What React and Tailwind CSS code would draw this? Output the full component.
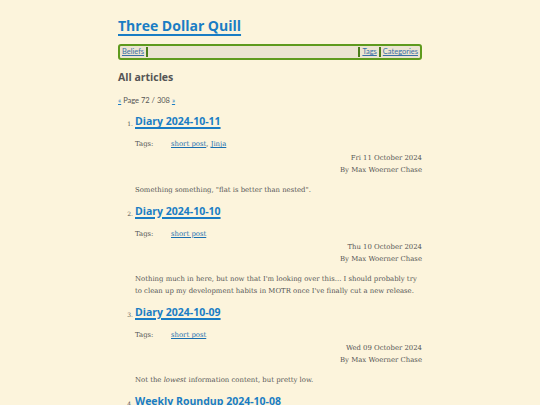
const posts = [
  {
    n: 1,
    title: 'Diary 2024-10-11',
    tags: ['short post', 'Jinja'],
    date: 'Fri 11 October 2024',
    summary: <>Something something, "flat is better than nested".</>,
  },
  {
    n: 2,
    title: 'Diary 2024-10-10',
    tags: ['short post'],
    date: 'Thu 10 October 2024',
    summary: (
      <>
        Nothing much in here, but now that I'm looking over this... I should probably try to clean up my
        development habits in MOTR once I've finally cut a new release.
      </>
    ),
  },
  {
    n: 3,
    title: 'Diary 2024-10-09',
    tags: ['short post'],
    date: 'Wed 09 October 2024',
    summary: (
      <>
        Not the <em>lowest</em> information content, but pretty low.
      </>
    ),
  },
  {
    n: 4,
    title: 'Weekly Roundup 2024-10-08',
    tags: ['short post'],
    date: 'Tue 08 October 2024',
    summary: <>Nothing much this week.</>,
  },
]

const sans = "font-['Open_Sans','Lato',sans-serif]"
const serif = "font-['DejaVu_Serif','Liberation_Serif',serif]"

function Post({ post }) {
  return (
    <li className="flex">
      <span className={`${serif} w-[17px] shrink-0 text-right pr-[2px] pt-[6px] text-[6px] text-[#555]`}>
        {post.n}.
      </span>
      <div className="flex-1">
        <h2 className={`${sans} text-[10.5px] font-bold leading-[17px]`}>
          <a href="#" className="text-[#1a7dc4] underline decoration-[1.5px] underline-offset-[2px]">
            {post.title}
          </a>
        </h2>
        <div className={`${serif} text-[6.9px] text-[#555] mt-[9px] flex`}>
          <span className="w-[36px]">Tags:</span>
          <span>
            {post.tags.map((t, i) => (
              <span key={t}>
                {i > 0 && ', '}
                <a href="#" className="text-[#1a6fb0] underline">
                  {t}
                </a>
              </span>
            ))}
          </span>
        </div>
        <div className={`${serif} text-[6.9px] text-[#555] text-right leading-[12px] mt-[2px]`}>
          <div>{post.date}</div>
          <div>By Max Woerner Chase</div>
        </div>
        <p className={`${serif} text-[6.9px] text-[#555] leading-[12px] mt-[8px]`}>{post.summary}</p>
      </div>
    </li>
  )
}

export default function App() {
  return (
    <div className="min-h-[405px] bg-[#fcf4dc] flex justify-center">
      <div className="w-[304px] pt-[14px]">
        <h1 className={`${sans} text-[14px] font-bold leading-[24px]`}>
          <a href="#" className="text-[#1a7dc4] underline decoration-2 underline-offset-[3px]">
            Three Dollar Quill
          </a>
        </h1>
        <nav
          className={`font-['Lato',sans-serif] mt-[6px] h-[16px] flex items-center border-2 border-[#5e9a1e] rounded-[3px] bg-[#ebe4d1] text-[7.5px] px-[1px]`}
        >
          <a href="#" className="text-[#3a6fa6] underline px-[1px]">
            Beliefs
          </a>
          <span className="w-[2px] h-[10px] bg-[#4a7d1a] mx-[1px]" />
          <span className="flex-1" />
          <span className="w-[2px] h-[10px] bg-[#4a7d1a] mx-[1px]" />
          <a href="#" className="text-[#3a6fa6] underline px-[1px]">
            Tags
          </a>
          <span className="w-[2px] h-[10px] bg-[#4a7d1a] mx-[1px]" />
          <a href="#" className="text-[#3a6fa6] underline px-[1px]">
            Categories
          </a>
        </nav>
        <h2 className={`${sans} text-[10.5px] font-bold text-[#555] mt-[8px] leading-[18px]`}>All articles</h2>
        <div className="font-['Lato',sans-serif] text-[7.5px] text-[#555] mt-[9px]">
          <a href="#" className="text-[#1a7dc4] underline">
            «
          </a>{' '}
          Page 72 / 308{' '}
          <a href="#" className="text-[#1a7dc4] underline">
            »
          </a>
        </div>
        <ol className="mt-[7px] flex flex-col gap-[7px]">
          {posts.map((p) => (
            <Post key={p.n} post={p} />
          ))}
        </ol>
      </div>
    </div>
  )
}
